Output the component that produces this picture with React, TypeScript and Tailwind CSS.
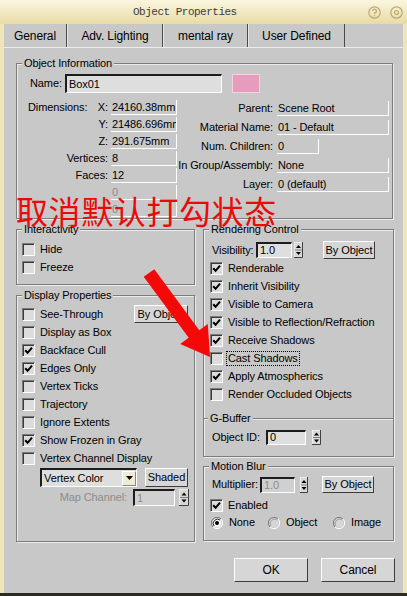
import React from "react";

const ui = "font-['Liberation_Sans',Arial,sans-serif] text-[11px] tracking-[-0.1px] leading-none text-black whitespace-nowrap";

function Check({ on }: { on?: boolean }) {
  return (
    <span className="w-[13px] h-[13px] shrink-0 flex items-center justify-center border-t border-l border-t-[#7a7a7a] border-l-[#7a7a7a] border-b border-r border-b-white border-r-white bg-[#dcdcdc] shadow-[inset_1px_1px_0_#3a3a3a]">
      {on && (
        <svg width="9" height="9" viewBox="0 0 9 9">
          <path d="M1.2 4.2 L3.6 6.8 L8 1.6" fill="none" stroke="#000" strokeWidth="2" />
        </svg>
      )}
    </span>
  );
}

function CheckRow({ label, on, focus }: { label: string; on?: boolean; focus?: boolean }) {
  return (
    <div className="flex items-center h-[18px] gap-[5px] shrink-0">
      <Check on={on} />
      <span className={focus ? "border border-dotted border-black px-[1px] py-[1px] -ml-[2px]" : ""}>{label}</span>
    </div>
  );
}

function Radio({ on }: { on?: boolean }) {
  return (
    <svg width="12" height="12" viewBox="0 0 12 12" className="shrink-0">
      <path d="M10 2 A5.5 5.5 0 0 0 2 10" fill="none" stroke="#7a7a7a" strokeWidth="1" />
      <path d="M2 10 A5.5 5.5 0 0 0 10 2" fill="none" stroke="#ffffff" strokeWidth="1" />
      <circle cx="6" cy="6" r="4.5" fill={on ? "#f4f4f4" : "#d6d6d6"} />
      <path d="M9 3 A4.3 4.3 0 0 0 3 9" fill="none" stroke={on ? "#303030" : "#a0a0a0"} strokeWidth="1" />
      {on && <circle cx="6" cy="6" r="2" fill="#000" />}
    </svg>
  );
}

function Spinner({ w, h }: { w: number; h: number }) {
  const m = h / 2;
  return (
    <svg width={w} height={h} viewBox={`0 0 ${w} ${h}`} className="shrink-0">
      <rect x="0" y="0" width={w} height={h} fill="#d8d8d8" />
      <path d={`M0 ${h} V0 H${w}`} fill="none" stroke="#ffffff" strokeWidth="1" />
      <path d={`M${w - 0.5} 0 V${h - 0.5} H0`} fill="none" stroke="#404040" strokeWidth="1" />
      <line x1="1" y1={m} x2={w - 1} y2={m} stroke="#808080" strokeWidth="1" />
      <path d={`M${w / 2 - 2.5} ${m - 2} L${w / 2 + 2.5} ${m - 2} L${w / 2} ${m - 5} Z`} fill="#000" />
      <path d={`M${w / 2 - 2.5} ${m + 2} L${w / 2 + 2.5} ${m + 2} L${w / 2} ${m + 5} Z`} fill="#000" />
    </svg>
  );
}

function Btn({ children, className = "" }: { children: React.ReactNode; className?: string }) {
  return (
    <div
      className={`flex items-center justify-center shrink-0 bg-[#d6d6d6] border-t border-l border-t-white border-l-white border-b border-r border-b-[#3c3c3c] border-r-[#3c3c3c] ${className}`}
    >
      {children}
    </div>
  );
}

function Input({ children, className = "", dim }: { children: React.ReactNode; className?: string; dim?: boolean }) {
  return (
    <div
      className={`flex items-center shrink-0 overflow-hidden pl-[2px] border-t-2 border-l-2 border-t-[#1c1c1c] border-l-[#1c1c1c] border-b border-r border-b-white border-r-white ${
        dim ? "bg-[#d0d0d0] text-[#8c8c8c]" : "bg-[#dedede]"
      } ${className}`}
    >
      {children}
    </div>
  );
}

function Field({ children, className = "", dim }: { children?: React.ReactNode; className?: string; dim?: boolean }) {
  return (
    <div
      className={`h-[15px] flex items-center shrink-0 overflow-hidden pl-[1px] border-b border-r border-white ${
        dim ? "text-[#8c8c8c]" : ""
      } ${className}`}
    >
      {children}
    </div>
  );
}

function Group({ label, className = "", children }: { label: string; className?: string; children: React.ReactNode }) {
  return (
    <div className={`flex flex-col shrink-0 border border-[#7c7c7c] shadow-[inset_1px_1px_0_#ececec,1px_1px_0_#ececec] ${className}`}>
      <div className="-mt-[8px] ml-[5px] px-[2px] h-[14px] w-fit flex items-center bg-[#c8c8c8]">{label}</div>
      {children}
    </div>
  );
}

export default function App() {
  return (
    <div className={`relative w-[407px] h-[596px] overflow-hidden bg-[#efe5b9] border-b-[3px] border-b-[#2c2b22] ${ui}`}>
      {/* title bar */}
      <div className="h-[24px] flex items-center bg-gradient-to-b from-[#fbf6e0] to-[#e8dba6]">
        <span className="pl-[133px] font-['Liberation_Mono',monospace] text-[11px] tracking-[-0.5px] text-[#3c3c3c]">
          Object Properties
        </span>
        <div className="ml-auto mr-[4px] flex items-center gap-[9px]">
          <svg width="13" height="13" viewBox="0 0 13 13">
            <circle cx="6.5" cy="6.5" r="5.7" fill="none" stroke="#bca974" strokeWidth="1.2" />
            <path d="M4.6 5 A1.9 1.9 0 1 1 6.5 6.9 V8" fill="none" stroke="#bca974" strokeWidth="1.2" />
            <circle cx="6.5" cy="9.8" r="0.7" fill="#bca974" />
          </svg>
          <svg width="13" height="13" viewBox="0 0 13 13">
            <circle cx="6.5" cy="6.5" r="5.7" fill="none" stroke="#bca974" strokeWidth="1.2" />
            <circle cx="6.5" cy="6.5" r="2" fill="none" stroke="#bca974" strokeWidth="1.2" />
          </svg>
        </div>
      </div>

      <div className="mx-[4px] h-[569px] bg-[#c8c8c8] flex flex-col">
        {/* tabs */}
        <div className="h-[24px] flex items-stretch border-b border-b-[#ececec] shrink-0 text-[12px]">
          <div className="w-[63px] flex items-center justify-center border-r border-r-[#4a4a4a]">General</div>
          <div className="w-[96px] flex items-center justify-center border-r border-r-[#4a4a4a] border-l border-l-[#e6e6e6]">Adv. Lighting</div>
          <div className="w-[85px] flex items-center justify-center border-r border-r-[#4a4a4a] border-l border-l-[#e6e6e6]">mental ray</div>
          <div className="w-[97px] flex items-center justify-center border-r border-r-[#4a4a4a] border-l border-l-[#e6e6e6]">User Defined</div>
        </div>

        {/* Object Information */}
        <Group label="Object Information" className="ml-[12px] mt-[15px] w-[377px] h-[156px]">
          <div className="flex items-center h-[19px] mt-[4px] pl-[13px]">
            <span className="w-[35px]">Name:</span>
            <Input className="w-[157px] h-[19px]">Box01</Input>
            <div className="ml-[10px] w-[28px] h-[19px] bg-[#e79cbe] border border-[#f2d2e0]" />
          </div>
          <div className="flex mt-[6px]">
            <div className="w-[160px] shrink-0 flex flex-col">
              {[
                ["X:", "24160.38mm"],
                ["Y:", "21486.696mm"],
                ["Z:", "291.675mm"],
                ["Vertices:", "8"],
                ["Faces:", "12"],
                ["", "0"],
                ["", "0"],
              ].map(([k, v], i) => (
                <div key={i} className="flex items-center h-[17px]">
                  <div className="w-[91px] shrink-0 flex justify-between">
                    <span className="pl-[11px]">{i === 0 ? "Dimensions:" : ""}</span>
                    <span>{k}</span>
                  </div>
                  <Field className="ml-[3px] w-[66px]" dim={i > 4}>
                    {v}
                  </Field>
                </div>
              ))}
            </div>
            <div className="flex-1 min-w-0 flex flex-col pr-[3px]">
              {[
                ["Parent:", "Scene Root", "w-[112px]"],
                ["Material Name:", "01 - Default", "w-[112px]"],
                ["Num. Children:", "0", "w-[42px] mr-[70px]"],
                ["In Group/Assembly:", "None", "w-[112px]"],
                ["Layer:", "0 (default)", "w-[112px]"],
              ].map(([k, v, w]) => (
                <div key={k} className="flex items-center h-[19px]">
                  <span className="flex-1 min-w-0 text-right">{k}</span>
                  <Field className={`ml-[4px] ${w}`}>{v}</Field>
                </div>
              ))}
            </div>
          </div>
        </Group>

        <div className="flex ml-[12px] mt-[10px] gap-[8px]">
          {/* left column */}
          <div className="w-[179px] flex flex-col">
            <Group label="Interactivity" className="h-[56px]">
              <div className="flex flex-col mt-[4px] pl-[5px]">
                <CheckRow label="Hide" />
                <CheckRow label="Freeze" />
              </div>
            </Group>
            <Group label="Display Properties" className="mt-[10px] h-[247px]">
              <div className="flex flex-col mt-[3px] pl-[5px]">
                <div className="flex items-center h-[18px]">
                  <CheckRow label="See-Through" />
                  <Btn className="ml-auto mr-[6px] w-[54px] h-[18px]">By Object</Btn>
                </div>
                <CheckRow label="Display as Box" />
                <CheckRow label="Backface Cull" on />
                <CheckRow label="Edges Only" on />
                <CheckRow label="Vertex Ticks" />
                <CheckRow label="Trajectory" />
                <CheckRow label="Ignore Extents" />
                <CheckRow label="Show Frozen in Gray" on />
                <CheckRow label="Vertex Channel Display" />
              </div>
              <div className="flex items-center mt-[1px] pl-[23px]">
                <Input className="w-[97px] h-[19px] pr-0">
                  <span className="flex-1">Vertex Color</span>
                  <div className="w-[14px] h-[15px] flex items-center justify-center bg-[#efebd6] border-t border-l border-t-white border-l-white border-b border-r border-b-[#8a8a7a] border-r-[#8a8a7a]">
                    <svg width="7" height="4" viewBox="0 0 7 4">
                      <path d="M0 0 H7 L3.5 4 Z" fill="#000" />
                    </svg>
                  </div>
                </Input>
                <Btn className="ml-[8px] w-[43px] h-[19px]">Shaded</Btn>
              </div>
              <div className="flex items-center mt-[2px] h-[17px]">
                <span className="w-[110px] text-right text-[#8c8c8c]">Map Channel:</span>
                <Input dim className="ml-[6px] w-[42px] h-[17px]">1</Input>
                <div className="ml-[4px]">
                  <Spinner w={10} h={17} />
                </div>
              </div>
            </Group>
          </div>

          {/* right column */}
          <div className="w-[191px] flex flex-col">
            <Group label="Rendering Control" className="h-[228px]">
              <div className="flex items-center h-[18px] mt-[5px] pl-[8px]">
                <span className="w-[44px] shrink-0">Visibility:</span>
                <Input className="w-[36px] h-[16px]">1.0</Input>
                <div className="ml-[2px]">
                  <Spinner w={9} h={16} />
                </div>
                <Btn className="ml-[20px] w-[52px] h-[18px]">By Object</Btn>
              </div>
              <div className="flex flex-col pl-[6px]">
                <CheckRow label="Renderable" on />
                <CheckRow label="Inherit Visibility" on />
                <CheckRow label="Visible to Camera" on />
                <CheckRow label="Visible to Reflection/Refraction" on />
                <CheckRow label="Receive Shadows" on />
                <CheckRow label="Cast Shadows" focus />
                <CheckRow label="Apply Atmospherics" on />
                <CheckRow label="Render Occluded Objects" />
              </div>
              <div className="mt-[15px] border-t border-t-[#7c7c7c] shadow-[inset_0_1px_0_#ececec]">
                <div className="-mt-[8px] ml-[4px] px-[2px] h-[14px] w-fit flex items-center bg-[#c8c8c8]">G-Buffer</div>
              </div>
              <div className="flex items-center h-[16px] mt-[4px] pl-[8px]">
                <span className="w-[54px] shrink-0">Object ID:</span>
                <Input className="w-[40px] h-[15px]">0</Input>
                <div className="ml-[6px]">
                  <Spinner w={9} h={15} />
                </div>
              </div>
            </Group>

            <Group label="Motion Blur" className="mt-[9px] h-[75px]">
              <div className="flex items-center h-[17px] mt-[3px] pl-[8px]">
                <span className="w-[48px] shrink-0">Multiplier:</span>
                <Input dim className="w-[35px] h-[16px]">1.0</Input>
                <div className="ml-[5px]">
                  <Spinner w={8} h={16} />
                </div>
                <Btn className="ml-[14px] w-[52px] h-[17px]">By Object</Btn>
              </div>
              <div className="flex items-center h-[17px] mt-[4px] pl-[6px] gap-[5px]">
                <Check on />
                <span>Enabled</span>
              </div>
              <div className="flex items-center h-[17px] pl-[7px]">
                <div className="w-[57px] flex items-center gap-[6px]">
                  <Radio on />
                  <span>None</span>
                </div>
                <div className="w-[65px] flex items-center gap-[6px]">
                  <Radio />
                  <span>Object</span>
                </div>
                <div className="flex items-center gap-[6px]">
                  <Radio />
                  <span>Image</span>
                </div>
              </div>
            </Group>
          </div>
        </div>

        {/* OK / Cancel */}
        <div className="flex justify-end gap-[13px] pr-[8px] mt-[16px] text-[12px]">
          <Btn className="w-[74px] h-[24px] bg-[#c8c8c8]">OK</Btn>
          <Btn className="w-[74px] h-[24px] bg-[#c8c8c8]">Cancel</Btn>
        </div>
      </div>

      {/* annotation overlay */}
      <div className="absolute left-[16px] top-[194px] text-[32px] leading-[32px] tracking-[0.6px] text-[#ea0a0a] font-['Noto_Sans_CJK_SC',sans-serif] pointer-events-none">
        取消默认打勾状态
      </div>
      <svg className="absolute left-0 top-0 pointer-events-none" width="407" height="596" viewBox="0 0 407 596">
        <polygon
          points="143.7,276.8 154.3,269.2 199.3,330.2 207.8,324.1 210,357 180.2,343.9 188.7,337.8"
          fill="#f40808"
        />
      </svg>
    </div>
  );
}
